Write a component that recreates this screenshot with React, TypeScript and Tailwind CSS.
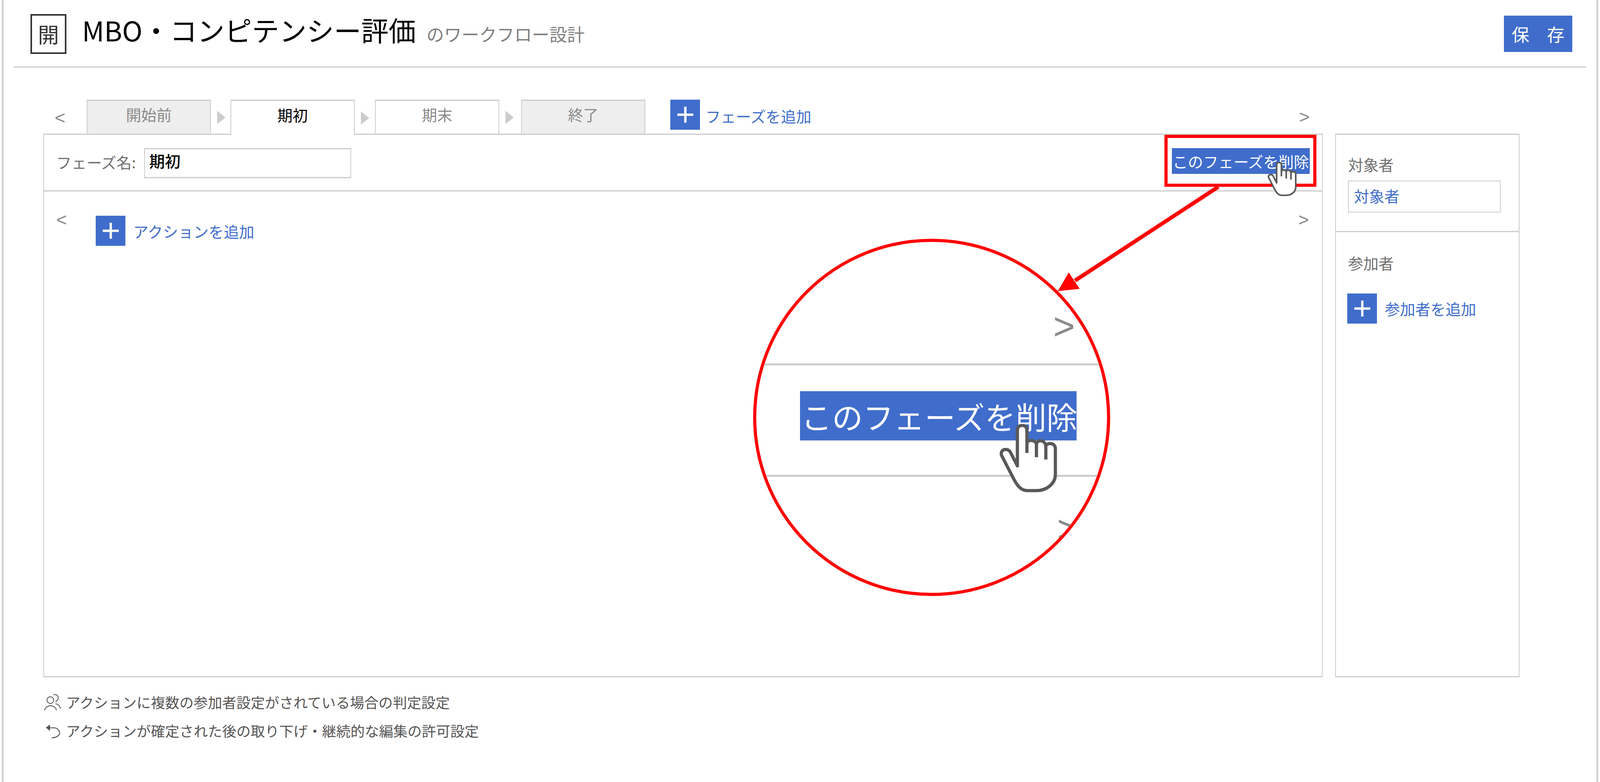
// The sandbox window measures 4096x2001 (not 4400x2001), so x values are the reference's x 0.931; y values are unchanged.
const tabs = [
  { label: '開始前', tone: 'bg-[#eeeeee] text-[#8a8a8a]', gap: 'w-[50px]' },
  { label: '期初', tone: 'relative z-10 h-[90px] bg-white text-black', gap: 'w-[52px]' },
  { label: '期末', tone: 'bg-white text-[#8a8a8a]', gap: 'w-[56px]' },
  { label: '終了', tone: 'bg-[#eeeeee] text-[#8a8a8a]', gap: 'w-[64px]' },
]

function AddBox() {
  return (
    <span className="flex h-[77px] w-[76px] shrink-0 items-center justify-center bg-[#406dcb]">
      <svg width="41" height="41" viewBox="0 0 41 41" fill="none" stroke="#ffffff" strokeWidth="6">
        <path d="M0 20.5H41M20.5 0V41" />
      </svg>
    </span>
  )
}

function HandCursor({ className }: { className: string }) {
  return (
    <svg className={className} viewBox="278 262 480 552" stroke="#595959" strokeWidth="26" strokeLinecap="butt" strokeLinejoin="round" fill="#ffffff">
      <path d="M428 600L372 490C350 450 285 465 300 515L385 680C420 750 450 800 510 800H580C670 800 735 740 735 670V460C735 410 665 410 658 440C650 385 590 385 582 425C575 385 510 385 505 420V310C505 260 428 260 428 310Z" />
      <path d="M505 420V495M582 425V530M658 440V548" fill="none" />
    </svg>
  )
}

function Magnifier() {
  return (
    <div className="absolute left-[1928px] top-[611px] h-[914px] w-[914px] overflow-hidden rounded-full border-[8px] border-[#ff0000] bg-white">
      <span className="absolute left-[760px] top-[168px] font-['Liberation_Sans',sans-serif] text-[96px] leading-none text-[#8a8a8a]">&gt;</span>
      <div className="absolute left-0 top-[311px] h-[5px] w-full bg-[#cccccc]" />
      <div className="absolute left-[112px] top-[382px] flex h-[126px] w-[708px] items-center overflow-hidden whitespace-nowrap bg-[#406dcb] pl-[3px] text-[79px] leading-none text-white">
        このフェーズを削除
      </div>
      <div className="absolute left-0 top-[596px] h-[5px] w-full bg-[#cccccc]" />
      <span className="absolute left-[770px] top-[686px] font-['Liberation_Sans',sans-serif] text-[96px] leading-none text-[#8a8a8a]">&gt;</span>
      <HandCursor className="absolute left-[621px] top-[466px] h-[175px] w-[152px]" />
    </div>
  )
}

export default function App() {
  return (
    <div className="relative h-[2001px] w-[4096px] overflow-hidden bg-white pl-[5px] pr-[5px] font-['Noto_Sans_CJK_JP','Liberation_Sans',sans-serif]">
      <div className="h-full border-x-[4px] border-[#cccccc]">
        {/* Header */}
        <header className="ml-[26px] mr-[27px] flex h-[173px] items-center border-b-[3px] border-[#cccccc] pl-[43px] pr-[35px] pt-[3px]">
          <span className="flex h-[102px] w-[92px] items-center justify-center border-[4px] border-[#333333] text-[54px] leading-none text-[#333333]">開</span>
          <h1 className="mb-[22px] ml-[40px] text-[70px] font-normal leading-none text-black">MBO・コンピテンシー評価</h1>
          <span className="ml-[27px] text-[45px] leading-none text-[#808080]">のワークフロー設計</span>
          <button className="ml-auto flex h-[93px] w-[175px] items-center justify-center bg-[#406dcb] text-[45px] leading-none text-white">保　存</button>
        </header>

        <div className="ml-[102px] mt-[82px] flex items-start gap-[32px]">
          <div className="w-[3275px]">
            {/* Phase tabs */}
            <div className="flex h-[87px] items-start">
              <span className="w-[111px] pl-[29px] pt-[22px] font-['Liberation_Sans',sans-serif] text-[47px] leading-none text-[#8a8a8a]">&lt;</span>
              {tabs.map((tab) => (
                <div key={tab.label} className="flex items-center">
                  <div className={`flex h-[87px] w-[318px] items-center justify-center border-x-2 border-t-[3px] border-[#cccccc] pb-[16px] text-[39px] leading-none ${tab.tone}`}>
                    {tab.label}
                  </div>
                  <div className={`flex ${tab.gap} pl-[16px]`}>
                    {tab.label !== '終了' && <div className="mt-[4px] h-[34px] w-[21px] bg-[#cccccc] [clip-path:polygon(0_0,100%_50%,0_100%)]" />}
                  </div>
                </div>
              ))}
              <div className="flex items-center">
                <AddBox />
                <span className="ml-[14px] mt-[6px] text-[39px] leading-none text-[#406dcb]">フェーズを追加</span>
              </div>
              <span className="ml-auto pr-[33px] pt-[20px] font-['Liberation_Sans',sans-serif] text-[47px] leading-none text-[#8a8a8a]">&gt;</span>
            </div>

            {/* Phase panel */}
            <div className="h-[1391px] border-x-2 border-b-[3px] border-t-[3px] border-[#cccccc]">
              <div className="flex h-[145px] items-start border-b-[3px] border-[#cccccc] pl-[31px] pr-[31px] pt-[34px]">
                <span className="mt-[16px] text-[39px] leading-none text-[#707070]">フェーズ名:</span>
                <input readOnly value="期初" className="ml-[21px] h-[77px] w-[530px] border-2 border-b-[3px] border-t-[3px] border-[#cccccc] pb-[14px] pl-[11px] text-[40px] font-medium leading-none text-black outline-none" />
                <span className="ml-auto flex h-[66px] w-[353px] items-center overflow-hidden whitespace-nowrap bg-[#406dcb] pl-[2px] text-[39px] leading-none text-white">このフェーズを削除</span>
              </div>
              <div className="flex items-start pl-[31px] pr-[33px] pt-[62px]">
                <span className="-mt-[14px] w-[101px] font-['Liberation_Sans',sans-serif] text-[47px] leading-none text-[#8a8a8a]">&lt;</span>
                <AddBox />
                <span className="ml-[20px] mt-[20px] text-[39px] leading-none text-[#406dcb]">アクションを追加</span>
                <span className="-mt-[14px] ml-auto font-['Liberation_Sans',sans-serif] text-[47px] leading-none text-[#8a8a8a]">&gt;</span>
              </div>
            </div>
          </div>

          {/* Side panel */}
          <div className="mt-[87px] h-[1391px] w-[472px] border-x-2 border-b-[3px] border-t-[3px] border-[#cccccc]">
            <div className="h-[249px] border-b-[3px] border-[#cccccc] pl-[31px] pt-[56px]">
              <div className="text-[39px] leading-none text-[#707070]">対象者</div>
              <div className="mt-[22px] flex h-[82px] w-[391px] items-center border-2 border-[#cccccc] pb-[6px] pl-[13px] text-[39px] leading-none text-[#406dcb]">対象者</div>
            </div>
            <div className="pl-[29px] pt-[59px]">
              <div className="pl-[2px] text-[39px] leading-none text-[#707070]">参加者</div>
              <div className="mt-[59px] flex items-center gap-[20px]">
                <AddBox />
                <span className="text-[39px] leading-none text-[#406dcb]">参加者を追加</span>
              </div>
            </div>
          </div>
        </div>

        {/* Footer notes */}
        <div className="ml-[102px] mt-[28px] text-[36.5px] leading-none text-[#555555]">
          <div className="flex h-[73px] items-center">
            <svg className="ml-[1px] h-[47px] w-[46px]" viewBox="30 24 150 141" fill="none" stroke="#555555" strokeWidth="7" strokeLinecap="round">
              <circle cx="85" cy="75" r="28" />
              <path d="M112 30C135 24 155 40 150 62C147 75 140 82 130 88" />
              <path d="M38 158C48 110 125 110 135 158" />
              <path d="M130 105C150 110 165 125 170 145" />
            </svg>
            <span className="ml-[11px]">アクションに複数の参加者設定がされている場合の判定設定</span>
          </div>
          <div className="flex h-[73px] items-center">
            <svg className="ml-[4px] h-[40px] w-[40px]" viewBox="40 250 130 120" fill="none" stroke="#555555" strokeWidth="8" strokeLinecap="round">
              <path d="M48 280L82 255V308Z" fill="#555555" stroke="none" />
              <path d="M82 282H115C145 282 162 305 162 325C162 348 130 365 100 365" />
            </svg>
            <span className="ml-[14px]">アクションが確定された後の取り下げ・継続的な編集の許可設定</span>
          </div>
        </div>
      </div>

      {/* Red callout drawn over the page */}
      <div className="absolute left-[2981px] top-[345px] h-[133px] w-[389px] border-[8px] border-[#ff0000]" />
      <svg className="absolute left-0 top-0" width="4096" height="2001" fill="none">
        <path d="M3119 478L2752 718" stroke="#ff0000" strokeWidth="10" />
      </svg>
      <Magnifier />
      <svg className="absolute left-0 top-0" width="4096" height="2001" fill="none">
        <path d="M2708 745L2736 697L2764 739Z" fill="#ff0000" />
      </svg>
      <HandCursor className="absolute left-[3244px] top-[414px] h-[88px] w-[77px]" />
    </div>
  )
}
